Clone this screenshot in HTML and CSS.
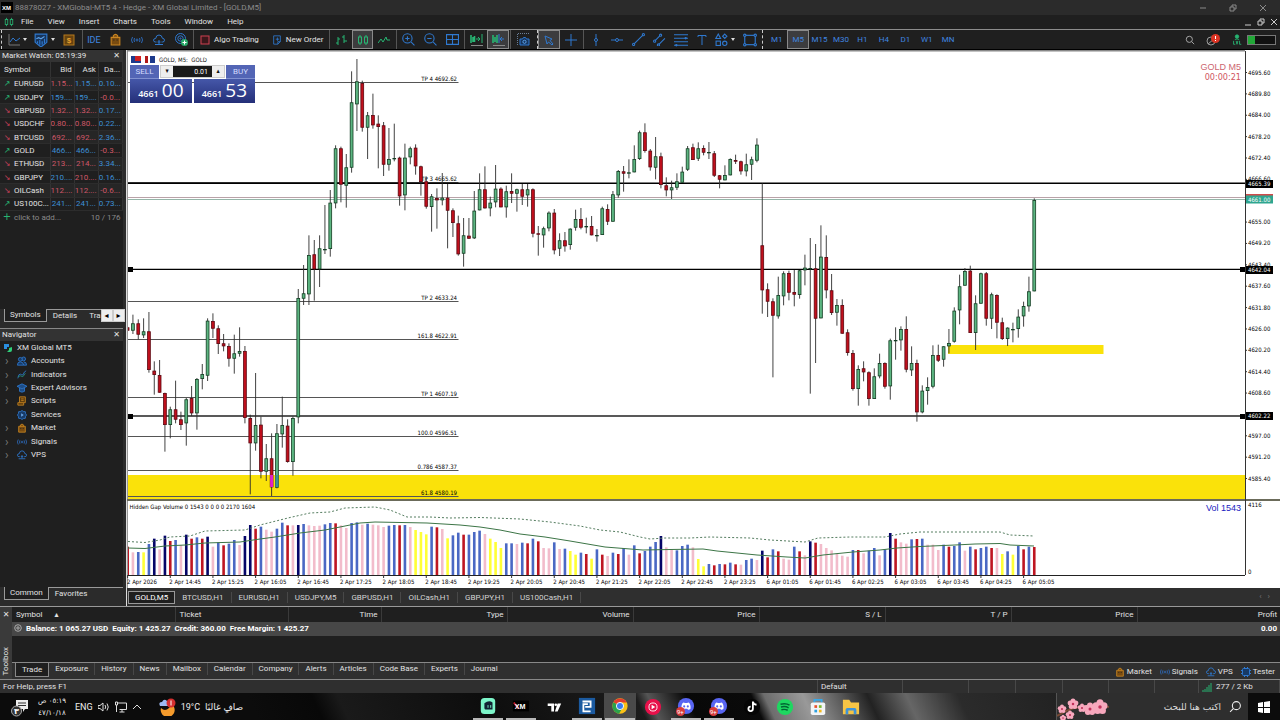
FILE: index.html
```html
<!DOCTYPE html>
<html lang="en">
<head>
<meta charset="utf-8">
<title>XMGlobal-MT5 4 - GOLD,M5</title>
<link rel="stylesheet" href="styles.css">
</head>
<body>
<svg class="defs" aria-hidden="true">
  <symbol id="i-bag" viewBox="0 0 12 12"><path d="M2 4h8v7H2zM4 4V2.500Q6 0 8 2.500V4" fill="#7a4c10" stroke="#c98522"/><path d="M4.500 6v1M7.500 6v1" stroke="#1f1f1f"/></symbol>
  <symbol id="i-signal" viewBox="0 0 12 12"><g fill="none" stroke="#2c69b8"><circle cx="6" cy="6" r="1"/><path d="M3.500 4q-1 2 0 4M8.500 4q1 2 0 4M1.500 3q-2 3 0 6M10.500 3q2 3 0 6"/></g></symbol>
  <symbol id="i-cloud" viewBox="0 0 12 12"><path d="M3.500 8H2.500Q.5 8 .5 6.200T2.700 4.500Q3 1 6 1t3.400 3.300Q11.500 4.400 11.500 6.200T9.500 8h-1M6 6v4M2 10.500h8M4.500 8h3" fill="none" stroke="#2f79d0"/></symbol>
  <symbol id="i-candles" viewBox="0 0 12 12"><g fill="none" stroke="#27b573"><rect x="1.500" y="3" width="3" height="6"/><rect x="7.500" y="3" width="3" height="6"/><path d="M3 1v2M3 9v2M9 1v2M9 9v2"/></g></symbol>
  <symbol id="i-search" viewBox="0 0 12 12"><circle cx="5.200" cy="5.200" r="3.700" fill="none" stroke="currentColor"/><path d="M8 8l3 3" stroke="currentColor"/></symbol>
  <symbol id="i-mono" viewBox="0 0 20 20"><circle cx="10" cy="10" r="9" fill="#5865f2"/><path d="M5 13q-.5-5 2-7l2 .8h2L13 6q2.500 2 2 7-1.500 1.500-3 1l-.5-1h-3L8 14q-1.500.5-3-1z" fill="#fff"/><circle cx="8" cy="10.500" r="1.200" fill="#5865f2"/><circle cx="12" cy="10.500" r="1.200" fill="#5865f2"/></symbol>
</svg>

<header class="titlebar">
  <svg class="app" viewBox="0 0 12 11"><rect width="12" height="11" fill="#000"/><text x="1" y="8" class="logo">XM</text></svg>
  <span>88878027 - XMGlobal-MT5 4 - Hedge - XM Global Limited - [GOLD,M5]</span>
  <div class="winbtns">
    <button aria-label="Minimize"><svg viewBox="0 0 8 8"><path d="M1 4h6"/></svg></button>
    <button aria-label="Restore"><svg viewBox="0 0 8 8"><path d="M1 3h4v4H1zM3 3V1h4v4H5"/></svg></button>
    <button aria-label="Close"><svg viewBox="0 0 8 8"><path d="M1 1l6 6M7 1L1 7"/></svg></button>
  </div>
</header>
<nav class="menubar">
  <svg class="ic10"><use href="#i-candles"/></svg>
  <button>File</button><button>View</button><button>Insert</button><button>Charts</button><button>Tools</button><button>Window</button><button>Help</button>
  <div class="winbtns small">
    <button aria-label="Minimize chart"><svg viewBox="0 0 8 8"><path d="M1 7h6"/></svg></button>
    <button aria-label="Restore chart"><svg viewBox="0 0 8 8"><path d="M1 3h4v4H1zM3 3V1h4v4H5"/></svg></button>
    <button aria-label="Close chart"><svg viewBox="0 0 8 8"><path d="M1 1l6 6M7 1L1 7"/></svg></button>
  </div>
</nav>

<div class="toolbar" role="toolbar">
  <div class="tg tg-first dotted">
    <button aria-label="Line chart"><svg class="ic12" viewBox="0 0 12 12"><path d="M1 0v11h11" fill="none" stroke="#777"/><path d="M2 8l3-4 3 3 4-3" fill="none" stroke="#2f79d0"/></svg><i class="arr"></i></button>
    <button aria-label="Indicators"><svg class="ic14" viewBox="0 0 12 12"><path d="M1 1h10v7l-5 4-5-4z" fill="#16345c" stroke="#2f79d0"/><path d="M2 5l2-1 2 1 3-2" fill="none" stroke="#5aa0e8"/><path d="M3 9V7M5 10V6M7 10V7M9 9V5" stroke="#2f79d0"/></svg><i class="arr"></i></button>
    <button aria-label="Market"><svg class="ic12" viewBox="0 0 12 12"><rect x="1" y="1" width="10" height="10" fill="#67430f" stroke="#b87a1c"/><text x="6" y="9" class="dollar">$</text></svg></button>
  </div>
  <div class="tg w107 sep">
    <button class="blue ide">IDE</button>
    <button aria-label="Market"><svg class="ic13"><use href="#i-bag"/></svg></button>
    <button aria-label="Signals"><svg class="ic12"><use href="#i-signal"/></svg></button>
    <button aria-label="VPS"><svg class="ic12"><use href="#i-cloud"/></svg></button>
    <button aria-label="Copy"><svg class="ic13" viewBox="0 0 13 13"><g fill="none" stroke="#2f79d0"><circle cx="5.500" cy="5.500" r="5"/><circle cx="5.500" cy="5.500" r="2.700"/><circle cx="5.500" cy="5.500" r=".6"/></g><circle cx="9.500" cy="9.500" r="3.500" fill="#27a866"/><path d="M7.500 9.500h4M9.500 7.500v4" stroke="#fff"/></svg></button>
  </div>
  <div class="tg words sep">
    <button><svg class="ic10" viewBox="0 0 10 10"><rect x="1" y="1" width="8" height="8" fill="#3b171b" stroke="#d04050"/></svg>Algo Trading</button>
    <button><svg class="ic10" viewBox="0 0 10 12"><path d="M1 1h8v7L6 11H1zM3.500 5h4M5.500 3v4M6 11V8h3" fill="none" stroke="#2f79d0"/></svg>New Order</button>
  </div>
  <div class="tg w64 sep">
    <button aria-label="Bars"><svg class="ic12" viewBox="0 0 12 12"><path d="M3 3v8M1 9h2M3 5h2M9 1v8M7 3h2M9 7h3" stroke="#27b573" fill="none"/></svg></button>
    <button class="on" aria-label="Candlesticks"><svg class="ic12"><use href="#i-candles"/></svg></button>
    <button aria-label="Line"><svg class="ic12" viewBox="0 0 12 12"><path d="M0 9l3-4 2 3 3-5 1 3h3" stroke="#27b573" fill="none"/></svg></button>
  </div>
  <div class="tg w66 sep">
    <button aria-label="Zoom in"><svg class="ic13" viewBox="0 0 12 12"><path d="M8.500 8.500l3 3M3 5h4M5 3v4" stroke="#2f79d0"/><circle cx="5" cy="5" r="4.300" fill="none" stroke="#2f79d0"/></svg></button>
    <button aria-label="Zoom out"><svg class="ic13" viewBox="0 0 12 12"><path d="M8.500 8.500l3 3M3 5h4" stroke="#2f79d0"/><circle cx="5" cy="5" r="4.300" fill="none" stroke="#2f79d0"/></svg></button>
    <button aria-label="Tile"><svg class="ic13" viewBox="0 0 12 12"><path d="M.5 1.500h11v9H.5zM6 1.500v9M.5 6h11" fill="none" stroke="#2f79d0"/></svg></button>
  </div>
  <div class="tg w44 sep">
    <button aria-label="Auto scroll"><svg class="ic14" viewBox="0 0 14 14"><path d="M2 2v8M4 4v5M5.500 3v6" stroke="#27b573" stroke-width="1.600"/><path d="M7 6h4M9 4l2 2-2 2M13 1v9" stroke="#27b573" fill="none"/><path d="M2 12.500h12" stroke="#888"/></svg></button>
    <button class="on" aria-label="Chart shift"><svg class="ic14" viewBox="0 0 14 14"><path d="M2 2v8M4 4v5M6 2v8" stroke="#27b573" stroke-width="1.600"/><path d="M13 6H9M11 4L9 6l2 2M8 1v9" stroke="#2f79d0" fill="none"/><path d="M2 12.500h12" stroke="#888"/></svg></button>
  </div>
  <div class="tg w26 sep">
    <button aria-label="Screenshot"><svg class="ic13" viewBox="0 0 13 13"><path d="M.5 12V.5h12" fill="none" stroke="#6a7f99" stroke-dasharray="1 1"/><path d="M3 6h2.500l1-1.500h2l1 1.500H12v6H3z" fill="#16345c" stroke="#2f79d0"/><circle cx="7.500" cy="8.800" r="1.600" fill="none" stroke="#5aa0e8"/></svg></button>
  </div>
  <div class="tg w44 dotted">
    <button class="on" aria-label="Cursor"><svg class="ic12" viewBox="0 0 12 12"><path d="M2 2l7 3-2 1.500L10 10l-1 1-3.500-3L4 10z" fill="none" stroke="#2f79d0"/></svg></button>
    <button aria-label="Crosshair"><svg class="ic12" viewBox="0 0 12 12"><path d="M6 0v12M0 6h12" stroke="#2f79d0"/></svg></button>
  </div>
  <div class="tg w128 sep">
    <button aria-label="Vertical line"><svg class="ic12" viewBox="0 0 12 12"><g fill="#1f1f1f" stroke="#2f79d0"><path d="M6 0v12"/><circle cx="6" cy="6" r="1.500"/></g></svg></button>
    <button aria-label="Horizontal line"><svg class="ic12" viewBox="0 0 12 12"><g fill="#1f1f1f" stroke="#2f79d0"><path d="M0 6h12"/><circle cx="6" cy="6" r="1.500"/></g></svg></button>
    <button aria-label="Trend line"><svg class="ic13" viewBox="0 0 12 12"><g fill="#1f1f1f" stroke="#2f79d0"><path d="M1 11L11 1"/><circle cx="1.500" cy="10.500" r="1"/><circle cx="10.500" cy="1.500" r="1"/></g></svg></button>
    <button aria-label="Channel"><svg class="ic13" viewBox="0 0 12 12"><g fill="#1f1f1f" stroke="#2f79d0"><path d="M1 8l6-6M5 11l6-6"/><circle cx="1.500" cy="7.500" r="1"/><circle cx="7" cy="2" r="1"/><circle cx="5" cy="11" r="1"/></g></svg></button>
    <button aria-label="Fibonacci"><svg class="ic14" viewBox="0 0 12 12"><path d="M0 1.500h12M0 4.500h12M0 7.500h12M0 10.500h12" stroke="#2f79d0"/><circle cx="10" cy="4.500" r="1" fill="#2f79d0"/><circle cx="2" cy="10.500" r="1" fill="#2f79d0"/></svg></button>
    <button aria-label="Text"><svg class="ic12" viewBox="0 0 12 12"><path d="M2 3V1.500h8V3M6 1.500V11" fill="none" stroke="#2f79d0"/></svg></button>
  </div>
  <div class="tg shapes">
    <button aria-label="Shapes"><svg class="ic13" viewBox="0 0 12 12"><path d="M3 1l2.200 4H.8zM9 1l2 2-2 2-2-2z" fill="none" stroke="#2f79d0"/><rect x="1" y="7.500" width="4" height="4" fill="none" stroke="#2f79d0"/><circle cx="9" cy="9.500" r="2" fill="none" stroke="#2f79d0"/></svg><i class="arr"></i></button>
    <button aria-label="Frame"><svg class="ic14" viewBox="0 0 12 12"><g fill="#1f1f1f" stroke="#2f79d0"><rect x="1.500" y="2" width="9" height="8"/><circle cx="1.500" cy="2" r="1"/><circle cx="10.500" cy="2" r="1"/><circle cx="1.500" cy="10" r="1"/><circle cx="10.500" cy="10" r="1"/></g></svg></button>
  </div>
  <div class="tg frames dotted">
    <button>M1</button><button class="on">M5</button><button>M15</button><button>M30</button><button>H1</button><button>H4</button><button>D1</button><button>W1</button><button>MN</button>
  </div>
  <div class="tright">
    <button aria-label="Search"><svg class="ic10"><use href="#i-search"/></svg></button>
    <button aria-label="Notifications"><svg class="ic14" viewBox="0 0 14 12"><circle cx="5" cy="7" r="4" fill="none" stroke="#999"/><path d="M2 10l6-5" stroke="#999"/><circle cx="9.500" cy="4.500" r="4.500" fill="#dc3424"/><path d="M9.500 2v3M9.500 6v1" stroke="#fff"/></svg></button>
    <button aria-label="Level"><svg class="ic12" viewBox="0 0 12 14"><g fill="none" stroke="#27b573"><circle cx="6" cy="3" r="2" fill="#27b573"/><path d="M3.500 6.500q2.500-1.500 5 0"/><path d="M2 8v4h2M5 8l1 4 1-4M9 8v4h2"/></g></svg></button>
    <progress max="100" value="25" aria-label="Level progress"></progress>
  </div>
</div>

<main class="work">
  <aside class="side">
    <section class="watch">
      <h2 class="ptitle">Market Watch: 05:19:39<button aria-label="Close Market Watch">✕</button></h2>
      <table class="quotes">
        <thead><tr><th>Symbol</th><th>Bid</th><th>Ask</th><th>Da...</th></tr></thead>
        <tbody>
          <tr><td class="up">EURUSD</td><td class="r">1.15...</td><td class="b">1.15...</td><td class="b">0.10...</td></tr>
          <tr><td class="up">USDJPY</td><td class="b">159....</td><td class="b">159....</td><td class="r">-0.0...</td></tr>
          <tr><td class="dn">GBPUSD</td><td class="r">1.32...</td><td class="r">1.32...</td><td class="b">0.17...</td></tr>
          <tr><td class="dn">USDCHF</td><td class="r">0.80...</td><td class="r">0.80...</td><td class="b">0.22...</td></tr>
          <tr><td class="dn">BTCUSD</td><td class="r">692...</td><td class="r">692...</td><td class="b">2.36...</td></tr>
          <tr><td class="up">GOLD</td><td class="b">466...</td><td class="b">466...</td><td class="r">-0.3...</td></tr>
          <tr><td class="dn">ETHUSD</td><td class="r">213...</td><td class="r">214...</td><td class="b">3.34...</td></tr>
          <tr><td class="dn">GBPJPY</td><td class="b">210....</td><td class="r">210....</td><td class="b">0.16...</td></tr>
          <tr><td class="dn">OILCash</td><td class="r">112....</td><td class="r">112....</td><td class="r">-0.6...</td></tr>
          <tr><td class="up">US100C...</td><td class="b">241...</td><td class="b">241...</td><td class="b">0.73...</td></tr>
        </tbody>
        <tfoot><tr><td class="add" colspan="2">click to add...</td><td colspan="2">10 / 176</td></tr></tfoot>
      </table>
    </section>
    <div class="ptabs">
      <button class="on">Symbols</button><button>Details</button><button class="cut">Tra</button>
      <span class="pager"><button aria-label="Previous">◂</button><button aria-label="Next">▸</button></span>
    </div>
    <section class="navi">
      <h2 class="ptitle">Navigator<button aria-label="Close Navigator">✕</button></h2>
      <ul class="tree">
        <li class="root"><svg class="ic10" viewBox="0 0 10 10"><path d="M1 1h5v3H4v2H1z" fill="#2a8fe0"/><path d="M9 4v3q0 2-2 2H4l2-2V5z" fill="#2fd07a"/></svg>XM Global MT5</li>
        <li><svg class="ic12" viewBox="0 0 12 12"><g fill="#173a66" stroke="#2f79d0"><circle cx="8" cy="3.500" r="2.300"/><circle cx="4" cy="4" r="2.300"/><path d="M.5 11q0-4 3.500-4t4 4zM8 7q3.500 0 3.500 4H8"/></g></svg>Accounts</li>
        <li><svg class="ic12" viewBox="0 0 12 12"><path d="M1 10q1-6 3-5t3 1q2-5 4-5" fill="none" stroke="#2f79d0"/><path d="M1 8l3-1 3 1 3-4" fill="none" stroke="#27907a"/></svg>Indicators</li>
        <li><svg class="ic12" viewBox="0 0 12 12"><path d="M0 4l6-3 6 3-6 3zM3 6v4q3 2 6 0V6" fill="#1d4d87" stroke="#2f79d0"/></svg>Expert Advisors</li>
        <li><svg class="ic12" viewBox="0 0 12 12"><path d="M3 1h7v7H8v3H1V8h2z" fill="#5d3c0d" stroke="#c98522"/><path d="M5 3.500h3M5 5.500h3M3 8h5" stroke="#c98522"/></svg>Scripts</li>
        <li class="leaf"><svg class="ic12" viewBox="0 0 12 12"><path d="M6 .5l1.500 1.300 2.500.2.300 2.400L11.500 6l-1.200 1.600L10 10l-2.500.2L6 11.500l-1.500-1.300L2 10l-.3-2.400L.5 6l1.200-1.600L2 2l2.500-.2z" fill="#173a66" stroke="#2f79d0"/><path d="M5 4l3 2-3 2z" fill="#69a8ea"/></svg>Services</li>
        <li><svg class="ic12"><use href="#i-bag"/></svg>Market</li>
        <li><svg class="ic12"><use href="#i-signal"/></svg>Signals</li>
        <li><svg class="ic12"><use href="#i-cloud"/></svg>VPS</li>
      </ul>
    </section>
    <div class="ptabs last"><button class="on">Common</button><button>Favorites</button></div>
  </aside>

  <section class="charts">
    <div class="plot">
      <svg id="chart" viewBox="127 50 1153 538" role="img" aria-label="GOLD M5 candlestick chart"></svg>
      <div class="ticket">
        <div class="sym"><i class="flag"></i><i class="flag two"></i>GOLD, M5:&nbsp; GOLD</div>
        <div class="deal">
          <button class="sell">SELL</button>
          <span class="lot"><button aria-label="Less">▾</button><input aria-label="Volume" value="0.01"><button aria-label="More">▴</button></span>
          <button class="buy">BUY</button>
        </div>
        <div class="px"><button><b>4661</b><em>00</em></button><button><b>4661</b><em>53</em></button></div>
      </div>
    </div>
    <div class="ctabs">
      <button class="on">GOLD,M5</button><button>BTCUSD,H1</button><button>EURUSD,H1</button><button>USDJPY,M5</button><button>GBPUSD,H1</button><button>OILCash,H1</button><button>GBPJPY,H1</button><button>US100Cash,H1</button>
      <span class="more">‹ &nbsp; ›</span>
    </div>
  </section>
</main>

<section class="toolbox">
  <div class="rail"><button aria-label="Close Toolbox">✕</button><span>Toolbox</span></div>
  <div class="tbody">
    <table class="trades">
      <colgroup><col class="c1"><col class="c2"><col class="c3"><col class="c4"><col class="c4"><col class="c4"><col class="c4"><col class="c4"><col class="c4"><col class="c5"></colgroup>
      <thead><tr><th class="l">Symbol <span class="sort">▴</span></th><th class="l">Ticket</th><th>Time</th><th>Type</th><th>Volume</th><th>Price</th><th>S / L</th><th>T / P</th><th>Price</th><th>Profit</th></tr></thead>
      <tbody><tr><td colspan="9" class="l"><svg class="ic8" viewBox="0 0 8 8"><circle cx="4" cy="4" r="3.300" fill="none" stroke="#aaa"/><path d="M4 2v4M2 4h4" stroke="#aaa"/></svg>Balance: 1 065.27 USD&nbsp; Equity: 1 425.27&nbsp; Credit: 360.00&nbsp; Free Margin: 1 425.27</td><td>0.00</td></tr></tbody>
    </table>
    <div class="ttabs">
      <button class="on">Trade</button><button>Exposure</button><button>History</button><button>News</button><button>Mailbox</button><button>Calendar</button><button>Company</button><button>Alerts</button><button>Articles</button><button>Code Base</button><button>Experts</button><button>Journal</button>
      <div class="svc">
        <button><svg class="ic10"><use href="#i-bag"/></svg>Market</button><button><svg class="ic10"><use href="#i-signal"/></svg>Signals</button><button><svg class="ic10"><use href="#i-cloud"/></svg>VPS</button><button><svg class="ic10" viewBox="0 0 10 10"><rect x="1.500" y="1.500" width="7" height="7" rx="1" fill="#173a66" stroke="#2f79d0"/><path d="M0 3.500h1M0 6.500h1M9 3.500h1M9 6.500h1M3.500 0v1M6.500 0v1M3.500 9v1M6.500 9v1" stroke="#2f79d0"/></svg>Tester</button>
      </div>
    </div>
  </div>
</section>
<footer class="status">
  <span>For Help, press F1</span><span>Default</span><span></span><span></span><span></span><span></span><span></span><span></span>
  <span><svg class="ic10" viewBox="0 0 10 10"><path d="M1 10V8M3 10V7M5 10V5M7 10V3M9 10V1" stroke="#27b573"/></svg>277 / 2 Kb</span>
</footer>

<div class="taskbar">
  <div class="tray">
    <svg class="note" viewBox="0 0 18 20"><path d="M5 3h12v9h-3l-2 3v-3H5z" fill="#eee"/><path d="M7 6h8M7 8.500h8" stroke="#333"/><circle cx="5.500" cy="14" r="5" fill="#333" stroke="#aaa"/><text x="5.500" y="17" class="cnt">٣</text></svg>
    <div class="clock"><span dir="rtl">٠٥:١٩ ص</span><span>٤٧/١٠/١٨</span></div>
    <span class="lang">ENG</span>
    <svg class="ic12" viewBox="0 0 12 12"><path d="M0 4.500h2L5 2v8L2 7.500H0zM7 4q1.500 2 0 4M9 2.500q2.500 3.500 0 7" fill="none" stroke="#ddd"/></svg>
    <svg class="ic12" viewBox="0 0 12 12"><path d="M2.500 2h9v6.500h-7M7 8.500V11M4.500 11h5M.5 1h2v3h-2zM1.500 4v7" fill="none" stroke="#ddd"/></svg>
    <svg class="ic10" viewBox="0 0 10 10"><path d="M1 7l4-4 4 4" fill="none" stroke="#ddd"/></svg>
    <svg class="ic18 weather" viewBox="0 0 18 18"><path d="M16 9a7 7 0 1 1-13 1q4 4 8 0t0-6q4 1 5 5z" fill="#f59b2c"/><path d="M2 8q-2-4 2-4 2-4 5-1 4 1 2 5z" fill="#9db9f0"/><circle cx="13" cy="5" r="4.500" fill="#d42f2f"/><path d="M13 2.500v5" stroke="#fff"/></svg>
    <span class="temp">19°C</span><span class="ar" dir="rtl" lang="ar">صافٍ غالبًا</span>
  </div>
  <div class="apps">
    <button class="run" aria-label="Camera"><svg viewBox="0 0 20 20"><rect x="2" y="1" width="16" height="18" rx="4" fill="#7df5c9"/><path d="M6 7q5-4 9-1v8H7q-1 0-1-2z" fill="#123"/><path d="M10 9v3M13 9v3" stroke="#7df5c9"/></svg></button>
    <button class="run" aria-label="XM"><svg viewBox="0 0 20 20"><rect x="1" y="4" width="18" height="12" fill="#000"/><path d="M2 6l5 7" stroke="#c8202c" stroke-width="2"/><text x="3" y="13" class="xm">XM</text></svg></button>
    <button aria-label="TradingView"><svg viewBox="0 0 20 20"><path d="M3 6h7v9H7V9H3zM14 6h4l-4 9h-3z" fill="#fff"/><circle cx="12" cy="7.500" r="1.500" fill="#fff"/></svg></button>
    <button class="run" aria-label="Player"><svg viewBox="0 0 20 20"><rect x="1" y="1" width="18" height="18" fill="#1b5aa0"/><path d="M5 5h9v6H8M5 8h6M6 9v7h8" fill="none" stroke="#fff" stroke-width="2"/></svg></button>
    <button class="run act" aria-label="Chrome"><svg viewBox="0 0 20 20"><circle cx="10" cy="10" r="8.500" fill="#fbc116"/><path d="M10 10L2.700 5.700A8.500 8.500 0 0 1 17.500 6H10z" fill="#e33b2e"/><path d="M10 10l-7.300-4.300A8.500 8.500 0 0 0 9 18.500l4-7z" fill="#2ba24c"/><circle cx="10" cy="10" r="4" fill="#3a7df0" stroke="#fff"/></svg></button>
    <button aria-label="Music"><svg viewBox="0 0 20 20"><circle cx="10" cy="10" r="9" fill="#e8104a"/><circle cx="10" cy="10" r="4.500" fill="none" stroke="#fff"/><path d="M8.500 7.500l4 2.500-4 2.500z" fill="#fff"/></svg></button>
    <button class="run" aria-label="Chat"><svg><use href="#i-mono"/></svg><i class="badge">9+</i></button>
    <button class="run" aria-label="Chat 2"><svg><use href="#i-mono"/></svg><i class="badge">9+</i></button>
    <button aria-label="Clips"><svg viewBox="0 0 20 20"><circle cx="10" cy="10" r="9" fill="#050505"/><path d="M11 4v8a2.500 2.500 0 1 1-2.500-2.500M11 4q.5 3 4 3.500" fill="none" stroke="#fff" stroke-width="2"/></svg></button>
    <button aria-label="Audio"><svg viewBox="0 0 20 20"><circle cx="10" cy="10" r="9" fill="#1ed760"/><path d="M5 7q6-1.500 10 1M5.500 10q5-1.300 8.500 1M6 13q4-1 7 .6" fill="none" stroke="#063" stroke-width="1.600"/></svg></button>
    <button aria-label="Store"><svg viewBox="0 0 20 20"><path d="M6 5V2h8v3" fill="none" stroke="#38a8e8" stroke-width="2"/><rect x="2" y="5" width="16" height="14" rx="2" fill="#f2f4f6"/><path d="M6 8h3v3H6z" fill="#e8512c"/><path d="M11 8h3v3h-3z" fill="#7bb92e"/><path d="M6 13h3v3H6z" fill="#2c9fe0"/><path d="M11 13h3v3h-3z" fill="#f4b81c"/></svg></button>
    <button aria-label="Files"><svg viewBox="0 0 20 20"><path d="M1 2h7l2 3h9v13H1z" fill="#f6c445"/><path d="M6 11h8q2 0 2 2v5h-3v-4H7v4H4v-5q0-2 2-2z" fill="#3f93d8"/></svg></button>
  </div>
  <label class="find"><svg class="bloom" viewBox="0 0 56 26"><path d="M0 22Q20 8 52 13" fill="none" stroke="#7a4a35" stroke-width="2"/><g id="blossom" fill="#f7a8bd"></g></svg><input dir="rtl" lang="ar" aria-label="Search" placeholder="اكتب هنا للبحث"><svg class="ic13 flip"><use href="#i-search"/></svg></label>
  <button class="start" aria-label="Start"><svg class="ic12" viewBox="0 0 12 12"><path d="M0 2l5-1v5H0zM6 1l6-1v6H6zM0 7h5v5l-5-1zM6 7h6v6l-6-1z" fill="#fff"/></svg></button>
</div>
<script src="chart.js"></script>
</body>
</html>
```
FILE: styles.css
```css
* { box-sizing: border-box; }
body { margin: 0; background: #1f1f1f; color: #e2e2e2; font: 8px/12px Roboto, "Noto Sans", "DejaVu Sans", sans-serif; overflow-x: hidden; }
button, input { font: inherit; color: inherit; background: none; border: 0; padding: 0; margin: 0; white-space: nowrap; }
h2, ul { margin: 0; padding: 0; font: inherit; list-style: none; }
svg { display: block; flex: none; }
.defs { position: absolute; width: 0; height: 0; }
.ic8 { width: 8px; height: 8px; }
.ic10 { width: 10px; height: 10px; }
.ic12 { width: 12px; height: 12px; }
.ic13 { width: 13px; height: 13px; }
.ic14 { width: 14px; height: 14px; }
.ic18 { width: 18px; height: 18px; }

.titlebar { display: flex; align-items: center; gap: 2px; height: 15px; padding-left: 1px; background: #2b2b2b; color: #8c8c8c; }
.titlebar .app { width: 12px; height: 11px; }
.logo { font: bold 6px "Liberation Sans", sans-serif; fill: #fff; }
.winbtns { display: flex; gap: 22px; margin-left: auto; padding-right: 13px; }
.winbtns svg { width: 8px; height: 8px; fill: none; stroke: #8a8a8a; }
.winbtns.small { gap: 5px; padding-right: 2px; }
.winbtns.small svg { stroke: #ccc; }
.menubar { display: flex; align-items: center; height: 14px; padding-left: 4px; background: #1f1f1f; }
.menubar > button { padding: 0 7px; }

.toolbar { display: flex; align-items: stretch; height: 21px; border-top: 1px solid #8c8c8c; border-bottom: 1px solid #000; background: #1f1f1f; }
.tg { display: flex; flex: none; }
.tg button { display: flex; flex: 1; align-items: center; justify-content: center; min-width: 0; border: 1px solid transparent; }
.tg button.on { background: #3c3c3e; border-color: #8a8a8a; }
.sep { border-left: 1px solid #555; margin-left: 1px; }
.dotted { border-left: 1px dashed #ccc; }
.tg-first { width: 80px; margin-left: 1px; }
.tg-first button:nth-child(-n+2) { flex: none; width: 27px; padding-left: 3px; }
.arr { margin-left: 3px; border: 2px solid transparent; border-top: 3px solid #ddd; border-bottom: 0; }
.blue, .frames { color: #3f86e0; }
.tg .ide { font-size: 9px; }
.w107 { width: 110px; }
.words { width: 135px; }
.tg.words button { flex: none; gap: 4px; padding: 0 6px 0 5px; }
.w64 { width: 66px; }
.w66 { width: 67px; }
.w44 { width: 45px; }
.w26 { width: 26px; }
.w44.dotted { margin-left: 1px; }
.w128 { width: 130px; padding-left: 1px; }
.shapes { width: 49px; }
.tg.frames { width: 200px; padding: 0 3px; }
.tright { display: flex; align-items: center; gap: 11px; margin-left: auto; padding-right: 4px; color: #bbb; }
progress { appearance: none; width: 29px; height: 10px; margin-left: -7px; border: 1px solid #777; background: #111; }
progress::-webkit-progress-bar { background: #111; }
progress::-webkit-progress-value { background: #22a838; }

.work { display: grid; grid-template-columns: 127px minmax(0, 1fr); }
.side { display: flex; flex-direction: column; padding-right: 3px; background: #2b2b2b; border-right: 1px solid #ddd; }
.ptitle { display: flex; justify-content: space-between; height: 12px; padding: 0 3px 0 2px; background: #333; }
.watch { flex: 1; background: #1f1f1f; }
.quotes { width: 100%; height: 161px; border-collapse: collapse; table-layout: fixed; line-height: 11px; }
.quotes th, .quotes td { padding: 0 2px 0 0; font-weight: 400; text-align: right; border-right: 1px solid #333; border-bottom: 1px solid #2c2c2c; white-space: nowrap; overflow: hidden; }
.quotes th { height: 15px; }
.quotes th:first-child { width: 50px; text-align: left; padding-left: 4px; }
.quotes tbody tr:nth-child(odd) { background: #262626; }
.quotes td:first-child { text-align: left; }
.quotes .r { color: #cf5768; }
.quotes .b { color: #3d8fd6; }
.up::before, .dn::before, .add::before { display: inline-block; width: 14px; text-align: center; font-family: "DejaVu Sans", sans-serif; }
.up::before { content: "↗"; color: #27b573; }
.dn::before { content: "↘"; color: #c8405a; }
.add::before { content: "+"; color: #27b573; font-size: 10px; }
.quotes tfoot td { color: #8a8a8a; border: 0; }
.ptabs { display: flex; height: 13px; margin-bottom: 6px; padding-left: 4px; background: #2b2b2b; }
.ptabs button { padding: 0 6px; border-top: 1px solid #999; line-height: 12px; }
.ptabs button.on { border: 1px solid #999; border-top: 0; background: #1f1f1f; padding: 0 5px; }
.ptabs .cut { padding-right: 0; }
.ptabs .pager { display: flex; margin-left: auto; background: #eee; color: #000; }
.ptabs .pager button { width: 12px; padding: 0; border: 1px solid #ccc; }
.ptabs .pager button, .sort { font-family: "DejaVu Sans", sans-serif; }
.ptabs.last button:last-child { flex: 1; text-align: left; }
.navi { height: 259px; border-top: 1px solid #888; background: #1f1f1f; }
.tree { display: grid; grid-auto-rows: 1fr; height: 121px; }
.tree li { display: flex; align-items: center; gap: 4px; }
.tree li::before { content: "›"; width: 8px; padding-left: 5px; font-size: 12px; color: #777; }
.tree .leaf::before { content: ""; }
.tree .root { padding-left: 3px; }
.tree .root::before { display: none; }
.tree li + li svg { width: 10px; height: 10px; }

.plot { position: relative; background: #fff; }
#chart { width: 100%; height: auto; font: 6px "DejaVu Sans Condensed", "DejaVu Sans", sans-serif; }
#chart .tag { fill: #fff; }
#chart .vol { font: 9px "Liberation Sans", sans-serif; fill: #2020c0; }
#chart .red { font: 9px "Liberation Sans", sans-serif; fill: #cc6670; }
#chart .timer { font: 9px "DejaVu Sans Condensed", "DejaVu Sans", sans-serif; fill: #d05560; }
.ticket { position: absolute; left: 3px; top: 3px; width: 125px; color: #111; font: 7px/11px "DejaVu Sans Condensed", "DejaVu Sans", sans-serif; }
.sym { display: flex; align-items: center; font-size: 6px; height: 12px; padding-left: 1px; }
.flag { width: 10px; height: 7px; margin-right: 4px; background: linear-gradient(90deg, #1d3a8c 40%, #d02020 40%); border-bottom: 2px solid #1d3a8c; }
.flag.two { background: linear-gradient(90deg, #b01818 30%, #fff 30% 50%, #1d3a8c 50%); border: 0; }
.deal { display: flex; height: 14px; }
.sell, .buy { width: 29px; color: #d4dcff; background: #5365b5; font: 8px/13px Roboto, sans-serif; border-bottom: 1px solid #8090d0; }
.lot { display: flex; flex: 1; height: 13px; margin: 0 1px; border: 1px solid #ccc; background: #eee; }
.lot button { width: 12px; }
.lot input { flex: 1; width: 0; background: #1a1a1a; color: #fff; text-align: right; padding-right: 4px; font: 7px Roboto, sans-serif; }
.px { display: flex; gap: 2px; }
.px button { flex: 1; height: 24px; padding-bottom: 2px; color: #fff; background: linear-gradient(#4557a9, #242f78); font-family: "Open Sans", sans-serif; display: flex; align-items: baseline; justify-content: flex-end; gap: 3px; padding-right: 8px; }
.px b { font-size: 9px; font-weight: 600; }
.px em { font: 19px/22px "Open Sans", sans-serif; }

.ctabs { display: flex; align-items: center; height: 18px; padding-left: 1px; background: #2f2f2f; color: #d4d4d4; }
.ctabs button { padding: 0 7px; border-right: 1px solid #484848; line-height: 11px; }
.ctabs button.on { border: 1px solid #999; padding: 0 6px; height: 13px; color: #fff; background: #1f1f1f; }
.more { margin-left: auto; padding-right: 10px; color: #777; }

.toolbox { display: flex; border-top: 1px solid #999; border-bottom: 1px solid #888; background: #2f2f2f; height: 74px; }
.rail { display: flex; flex-direction: column; justify-content: space-between; width: 12px; padding: 2px 0 4px; background: #3a3a3a; }
.rail span { writing-mode: vertical-rl; transform: rotate(180deg); }
.tbody { display: flex; flex: 1; flex-direction: column; min-width: 0; background: #1f1f1f; }
.trades { width: 100%; table-layout: fixed; border-collapse: collapse; }
.trades .c1 { width: 163px; }
.trades .c2 { width: 113px; }
.trades .c3 { width: 93px; }
.trades .c4 { width: 126px; }
.trades .c5 { width: 143px; }
.trades th, .trades td { padding: 0 3px; text-align: right; height: 15px; font-weight: 400; border-right: 1px solid #3a3a3a; }
.trades th:last-child, .trades td { border-right: 0; }
.trades td { background: #474747; color: #fff; font-weight: 700; height: 14px; }
.trades .l { text-align: left; padding-left: 4px; }
.trades td.l { padding-left: 2px; }
.trades td svg { display: inline-block; margin-right: 4px; vertical-align: -1px; }
.sort { padding-left: 10px; }
.ttabs { display: flex; height: 17px; margin-top: auto; padding-left: 3px; border-top: 1px solid #888; background: #2f2f2f; line-height: 12px; }
.ttabs > button { height: 12px; padding: 0 6px; border-right: 1px solid #484848; }
.ttabs > button.on { height: 14px; border: 1px solid #888; border-top: 0; background: #1f1f1f; }
.ttabs > button:nth-last-child(2) { border: 0; }
.svc { display: flex; gap: 8px; margin-left: auto; padding: 2px 5px 0 0; }
.svc button { display: flex; align-items: center; gap: 2px; }

.status { display: grid; grid-template-columns: 818fr 85fr 66fr 47fr 47fr 46fr 46fr 44fr 81fr; height: 13px; background: #2f2f2f; }
.status span { display: flex; align-items: center; gap: 4px; padding-left: 3px; border-right: 1px solid #484848; }

.taskbar { display: grid; grid-template-columns: 472px 1fr 192px 32px; height: 27px; background: linear-gradient(65deg, #0c0c0c 20%, #080808 25%, #1a1a1a 27%, #0d0d0d 38%, #1c1c1c 50%, #555 51%, #080808 54%, #0a0a0a 59%, #6d6d6d 60%, #999 63%, #555 66%, #222 68%, #666 71%, #2b2b2b 75%, #0e0e0e); color: #eee; }
.tray { display: flex; align-items: center; gap: 5px; padding-left: 11px; }
.note { width: 18px; height: 20px; }
.cnt { font: bold 8px "DejaVu Sans", sans-serif; fill: #fff; text-anchor: middle; }
.clock { display: flex; flex-direction: column; align-items: center; width: 36px; font: 7px/12px "DejaVu Sans", sans-serif; }
.lang { font-size: 9px; }
.weather { margin-left: 11px; }
.temp { font-size: 9px; }
.ar { font: 9px "DejaVu Sans", sans-serif; }
.apps { display: flex; gap: 1px; }
.apps button { position: relative; display: flex; justify-content: center; align-items: center; width: 32px; }
.apps svg { width: 18px; height: 18px; }
.run { border-bottom: 2px solid transparent; border-image: linear-gradient(90deg, transparent 9%, #b8b8b8 9% 91%, transparent 91%) 2; }
.act { background: #4a4a4a; }
.badge { position: absolute; left: 6px; bottom: 2px; padding: 0 1px; border-radius: 5px; background: #d83c3c; color: #fff; font: 6px/9px Roboto, sans-serif; }
.xm { font: bold 8px "Liberation Sans", sans-serif; fill: #fff; }
.dollar { font: bold 8px "Liberation Sans", sans-serif; fill: #e0a030; text-anchor: middle; }
.find { display: flex; align-items: center; padding-right: 6px; background: #2e2e2e; border-left: 1px solid #555; }
.bloom { width: 56px; height: 26px; }
.find input { flex: 1; width: 0; padding-right: 8px; font: 9px "DejaVu Sans", sans-serif; }
.find input::placeholder { color: #ddd; }
.flip { transform: scaleX(-1); }
.start { display: flex; align-items: center; justify-content: center; background: #0c0c0c; }
```
FILE: chart.js
```js
// Each run: vertical origin, then bars as "colour high top bottom low" in thirds of a unit.
const runs = [
  [300, 'r80 82 92 92,g44 70 92 102,r58 70 104 118,g55 94 106 114,r36 94 210 218,r184 212 225 284,r180 225 278 278,r278 279 375 455,g320 328 375 415,r242 328 359 370,r335 358 375 390,g294 298 370 437,r258 294 340 348,g234 237 340 389,g192 222 237 268,g55 62 227 243,r40 63 86 114,r76 85 132 162,r102 130 139 154,r130 138 176 200,g104 160 176 221,g82 153 161 170,r138 153 354 370,r344 354 430 583,g219 375 430 452,r350 374 515 535,g432 475 515 543,r400 475 562 588,g372 400 563 565,g290 375 403 443,r358 377 486 488,g350 354 486 527,g-33 -6 352 370'],
  [50, 'g645 730 746 765,g556 615 733 765,r570 613 658 752,g556 595 658 711,g465 597 599 612,g420 458 597 620,g286 295 460 475,r290 295 404 457,g312 352 407 473,g64 157 353 368,g27 94 163 243,r92 99 233 245,g186 196 233 327,r131 195 226 236,r196 221 231 355,r216 226 344 378,g234 327 344 362,g221 324 328 334,r320 323 439 467,g281 323 436 481,g290 295 322 343,r283 293 349 374,r347 349 396 437,r380 394 470 476,g432 439 471 545,r415 444 451 536,g369 443 451 466,r402 443 482 595,r475 481 519 561,r497 520 613 617,g504 556 611 650,r504 557 566 567,g423 482 565 567,g370 418 481 481,r349 418 475 476,g440 458 475 499,g345 416 457 472,r412 416 472 472,g407 424 472 503'],
  [110, 'r190 243 251 279,g236 238 251 305,r222 238 260 285,g222 238 256 290,r235 238 371 382,r348 370 374 437,g350 355 376 413,g304 308 355 364,r297 308 421 433,g370 391 416 438,r366 391 409 425,g355 356 405 419,g299 327 353 362,r294 327 353 358,g323 348 352 370,r318 348 376 376,g357 375 377 395,g290 295 375 375,r283 297 335 345,g243 253 335 335,g180 183 256 263,r168 184 191 245,g148 187 190 205,g106 147 187 187,g62 67 147 150,r40 67 123 128,r117 122 172 182,g81 139 173 208,r128 139 225 235,r202 226 241 259,g212 232 241 267,g190 214 233 240,g170 185 218 218,g108 115 179 183,r101 112 150 150,g97 115 146 153,r106 114 128 136,g96 126 129 147,r123 130 197 201,r195 196 209 235,g166 195 211 211,g145 147 196 196,r134 150 155 162,r152 154 184 194,g131 163 184 199,g140 148 164 210,g85 104 152 157'],
  [180, 'r10 196 331 401,r310 328 365 411,r355 364 407 592,g290 345 409 416,g274 280 349 376,r272 279 338 361,r270 336 344 379,g270 271 345 356,g224 263 271 316,g174 264 267 641,r192 265 416 549,g136 230 415 415,r166 231 331 355,r282 331 399 405,g357 375 398 437,r358 375 461 461,r448 457 519 527,r510 519 627 632,g556 567 627 677,r544 565 577 604,r574 577 657 677,g565 589 657 657,g521 549 589 595,r547 549 620 626,g476 481 619 659,g442 480 483 539,g439 447 481 512,r409 447 569 577,g499 549 571 588,r539 549 697 725,g616 632 697 700,g592 621 633 674,g496 525 620 625,r494 525 542 546,g499 499 539 560,g447 489 499 520,g382 392 485 488,g284 319 391 433,g264 273 317 317,r257 272 459 459,g346 370 459 510,g278 280 371 371,r276 280 416 437,g338 343 416 447,r343 345 428 475,r413 427 477 480,g442 443 477 498,g428 447 449 487,g388 410 447 473,g365 378 409 440,g290 334 379 395,g55 60 334 334']
];
const volumes = 'r155 p172 b171 y172 b147 n131 p163 n122 r138 b135 p150 n119 r131 b127 r131 n125 p155 b142 r151 b146 b135 p150 n123 n90 r101 b95 p104 p110 b101 b83 r91 p91 n90 b87 p91 p93 p92 b88 b84 r85 p91 p99 b84 b82 p89 b86 p89 p91 p96 b92 b90 r91 b90 p96 y105 y111 y118 b95 r97 p102 y130 b121 b113 r119 b119 b111 b107 p117 y131 y141 y159 b145 b145 p147 b143 r145 b131 r139 p159 p160 b142 p162 b161 y168 y179 b173 r177 y191 b163 r179 p183 b173 r177 b159 p179 b151 r175 b168 b155 b141 n123 p157 p165 b166 b153 b149 p157 y192 y214 b207 r211 b207 r208 b203 r208 p209 b195 b191 p195 n167 r187 b163 r169 p191 p194 b155 r169 p181 n139 r143 p147 p159 p166 p176 p182 p185 b165 r165 p175 b167 b159 p181 b163 n114 r131 p142 p146 b133 r132 b131 p149 p149 p165 b149 r155 b153 b142 p167 b155 r163 b159 b155 r159 p159 y177 b169 y179 b153 r163 b155 r156'.split(' ');
const tint = { r: '#be1622', p: '#f2bccb', b: '#4a68c4', y: '#ffff35', n: '#050568' };
const xAt = k => 127.6 + k * 16 / 3;
const rect = (x, y, w, h, fill, more = '') => `<rect x="${x}" y="${y}" width="${w}" height="${h}" fill="${fill}" ${more}/>`;
const line = (x1, y1, x2, y2, color, w = 1) => `<path d="M${x1} ${y1}L${x2} ${y2}" stroke="${color}" stroke-width="${w}"/>`;
const text = (x, y, s, cls = '', anchor = 'start') => `<text x="${x}" y="${y}" class="${cls}" text-anchor="${anchor}">${s}</text>`;
let out = rect(127, 50, 1153, 538, '#fff');

out += rect(128, 475, 1117, 24, '#fae20a') + rect(948, 345, 155.500, 9, '#fae20a');

for (const [y, label] of [[82.5, 'TP 4 4692.62'], [182.5, 'TP 3 4665.62'], [301.5, 'TP 2 4633.24'], [339.5, '161.8 4622.91'], [397.5, 'TP 1 4607.19'], [436.5, '100.0 4596.51'], [470.5, '0.786 4587.37'], [496.5, '61.8 4580.19']]) {
  out += line(128, y, 458.5, y, '#555') + text(457, y - 2, label, '', 'end');
}
out += line(128, 197.5, 1245, 197.5, '#b9a2a8') + line(128, 199.5, 1245, 199.5, '#94b5a8');
out += line(128, 183.2, 1245, 183.2, '#000', 1.6) + line(128, 269.4, 1245, 269.4, '#000', 1.4) + line(128, 416, 1245, 416, '#222', 1.6);
for (const y of [267, 414]) out += rect(128, y, 5, 5, '#000') + rect(1240, y, 5, 5, '#000');

let k = 0;
for (const [origin, bars] of runs) {
  for (const bar of bars.split(',')) {
    const [h, t, b, l] = bar.slice(1).split(' ').map(v => origin + v / 3);
    const x = xAt(k++);
    out += line(x, h, x, l, '#2c2c2c', 0.9);
    out += rect(x - 1.4, t + 0.4, 2.8, Math.max(b - t - 0.8, 0.5), bar[0] === 'g' ? '#5cb581' : '#c00f1c', `stroke="${bar[0] === 'g' ? '#123c22' : '#5a0710'}" stroke-width=".8"`);
  }
}
out += rect(xAt(27) - 1.5, 475, 3, 12, '#e020c8') + rect(xAt(28) - 1.5, 475, 3, 12, '#3c8f96');

volumes.forEach((v, i) => {
  const top = 495 + v.slice(1) / 3;
  out += rect(Math.max(xAt(i) - 1.3, 128), top, i ? 2.6 : 1, 575 - top, tint[v[0]]);
});
out += '<polyline fill="none" stroke="#3c7546" points="128,548 145,548.5 165,546 185,545 205,543 240,542 260,539 275,537 300,533 325,530 345,526 360,523 375,522 427,523 460,525 480,527 500,530 520,534 545,537 570,541 605,547 643,550 670,549.5 703,549 717,551 737,553 757,555 787,557 805,558 823,555 853,552 880,550 897,548 920,546.5 955,545 975,544 1000,543.5 1010,545 1034,546"/>';
out += '<polyline fill="none" stroke="#557d60" stroke-dasharray="2 2" points="128,541.5 145,542.5 160,540 170,537 190,536 205,531 245,530 260,525 290,517.5 310,513 330,512 345,508 375,507 390,510 407,517 430,517 450,518 480,517.5 520,519 550,522 580,526 600,530 620,532 640,537 650,539 665,538 690,538 710,537 750,538 770,540 805,542 818,538 850,537 885,537 900,534 920,532 1000,532 1010,535 1034,536"/>';

// Frame and pane dividers
out += rect(127, 50, 1, 538, '#999') + rect(127, 50, 1118, 1.5, '#888') + rect(127, 499, 1153, 2, '#6b6b5a') + line(1245.5, 51, 1245.5, 575, '#333') + line(128, 575.5, 1245, 575.5, '#222');
out += text(129.5, 509, 'Hidden Gap Volume 0 1543 0 0 0 0 2170 1604') + text(1241, 511, 'Vol 1543', 'vol', 'end');
out += text(1241, 70, 'GOLD M5', 'red', 'end') + text(1241, 80, '00:00:21', 'timer', 'end');

for (let i = 0; i < 20; i++) {
  const y = 72.5 + i * 21.37;
  out += line(1245, y, 1247, y, '#333');
  if (i !== 6 && i !== 16) out += text(1248, y + 2, (4695.6 - i * 5.8).toFixed(2));
}
const tag = (y, s, fill) => rect(1246, y - 4, 27, 8, fill) + text(1248, y + 2, s, 'tag');
out += tag(184, '4665.39', '#000') + rect(1246, 194, 27, 2, '#d04a4a') + tag(199.5, '4661.00', '#2fa58f') + tag(270, '4642.04', '#000') + tag(416, '4602.22', '#000');
out += text(1248, 507, '4116') + text(1248, 574, '0');

const times = ['2 Apr 2026', '2 Apr 14:45', '2 Apr 15:25', '2 Apr 16:05', '2 Apr 16:45', '2 Apr 17:25', '2 Apr 18:05', '2 Apr 18:45', '2 Apr 19:25', '2 Apr 20:05', '2 Apr 20:45', '2 Apr 21:25', '2 Apr 22:05', '2 Apr 22:45', '2 Apr 23:25', '6 Apr 01:05', '6 Apr 01:45', '6 Apr 02:25', '6 Apr 03:05', '6 Apr 03:45', '6 Apr 04:25', '6 Apr 05:05'];
times.forEach((s, i) => {
  const x = xAt(i * 8);
  out += line(x, 575, x, 578, '#333') + text(Math.max(x - 1, 127), 584, s);
});
document.getElementById('chart').innerHTML = out;

// Blossom petals in the search box
document.getElementById('blossom').innerHTML = [[5, 15, 4], [16, 10, 5], [33, 15, 6], [43, 13, 7], [25, 14, 4], [13, 21, 4], [6, 24, 3]]
  .map(([x, y, r]) => [0, 1, 2, 3, 4].map(n => `<circle cx="${x + r * 0.6 * Math.sin(n * 1.257)}" cy="${y - r * 0.6 * Math.cos(n * 1.257)}" r="${r * 0.5}"/>`).join('') + `<circle cx="${x}" cy="${y}" r="${r * 0.25}" fill="#c2305a"/>`).join('');
```
